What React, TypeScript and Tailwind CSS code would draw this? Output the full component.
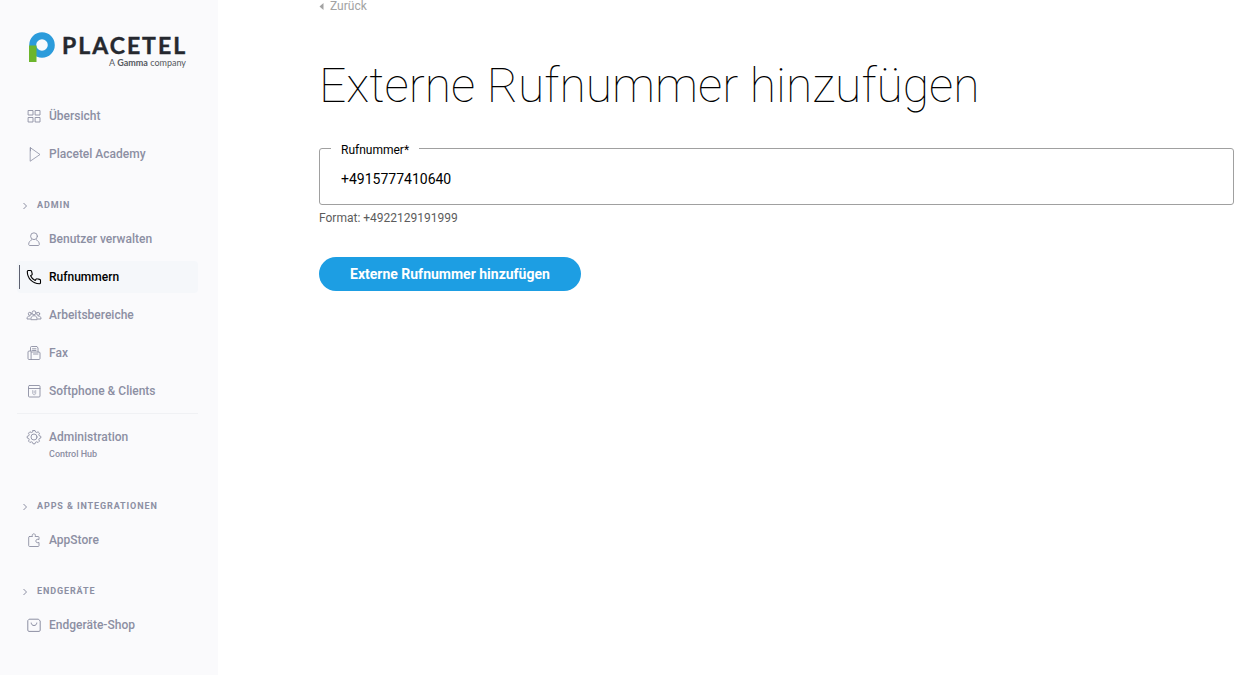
import { useState } from 'react';
import type { ReactNode } from 'react';

interface NavItemProps {
  icon: ReactNode;
  label: string;
  active?: boolean;
}

function Icon({ children }: { children: ReactNode }) {
  return (
    <svg
      viewBox="0 0 16 16"
      className="h-4 w-4 shrink-0"
      fill="none"
      stroke="currentColor"
      strokeLinecap="round"
      strokeLinejoin="round"
      aria-hidden="true"
    >
      {children}
    </svg>
  );
}

const icons = {
  grid: (
    <Icon>
      <path d="M2.5 2.5h4.5v4.5h-4.5zM9.5 2.5h4.5v4.5h-4.5zM2.5 9.5h4.5v4.5h-4.5zM9.5 9.5h4.5v4.5h-4.5z" strokeWidth="0.9" />
    </Icon>
  ),
  play: (
    <Icon>
      <path d="M4.5 1.8L14 8.5 4.5 15zM4.5 1.8v3" strokeWidth="0.8" />
    </Icon>
  ),
  user: (
    <Icon>
      <circle cx="8" cy="5.2" r="3.4" strokeWidth="0.9" />
      <path d="M5.6 8.8C4 9.7 2.7 11.2 2.7 13.2c0 1 .4 1.3 1.2 1.3h8.200c.8 0 1.2-.3 1.2-1.3 0-2-1.3-3.5-2.9-4.4" strokeWidth="0.9" />
    </Icon>
  ),
  phone: (
    <Icon>
      <path
        d="M2.2 1.5h2.4c.5 0 .9.3 1 .8l.6 2.6c.1.4 0 .8-.4 1l-1.2.9c.9 2.2 2.4 3.7 4.6 4.6l.9-1.2c.3-.3.7-.5 1-.4l2.6.6c.5.1.8.5.8 1v2.3c0 .6-.5 1-1.1 1C6.6 14.7 1.3 9.4 1.3 2.5c0-.6.4-1 .9-1z"
        strokeWidth="1.1"
      />
    </Icon>
  ),
  group: (
    <Icon>
      <g strokeWidth="0.9">
        <circle cx="8" cy="5.8" r="2" />
        <circle cx="3.8" cy="6.8" r="1.5" />
        <circle cx="12.2" cy="6.8" r="1.5" />
        <path d="M4.8 12.3c0-2.3 1.2-3.6 3.2-3.6s3.2 1.3 3.2 3.6zM4 12H1c0-2.1.9-3.1 2.8-3.1M12 12h3c0-2.1-.9-3.1-2.8-3.1" />
      </g>
    </Icon>
  ),
  fax: (
    <Icon>
      <g strokeWidth="0.9">
        <path d="M5.5 14.5h7.500c.6 0 1-.4 1-1V8c0-.6-.4-1-1-1H5.5zM5.5 14.5H3c-.6 0-1-.4-1-1V7c0-.6.5-1 1-1h2.5M4.5 6V2.5c0-.5.3-1 1-1H11l1 1.5v4" />
        <path d="M6.5 3.8h3.5M6.5 5.5h3.5M7.5 9h4.5" />
      </g>
    </Icon>
  ),
  app: (
    <Icon>
      <rect x="2.5" y="2.5" width="11.5" height="11.5" rx="1" strokeWidth="0.9" />
      <path d="M2.5 5.5h11.5" strokeWidth="0.9" />
      <path d="M6.7 7.5v2.5c0 1.2.6 1.7 1.5 1.7s1.5-.5 1.5-1.7V7.5M8.2 8v2" strokeWidth="0.6" />
    </Icon>
  ),
  gear: (
    <Icon>
      <g strokeWidth="0.9">
        <circle cx="8" cy="8" r="3" />
        <path d="M7 1.5h2l.5 1.5 1.2.5 1.4-.7 1.4 1.4-.7 1.4.5 1.2 1.5.5v1.7l-1.5.5-.5 1.2.7 1.4-1.4 1.4-1.4-.7-1.2.5L9 14.8H7l-.5-1.5-1.2-.5-1.4.7-1.4-1.4.7-1.4-.5-1.2L1.2 9V7.3l1.5-.5.5-1.2-.7-1.4 1.4-1.4 1.4.7L6.5 3z" />
      </g>
    </Icon>
  ),
  puzzle: (
    <Icon>
      <path d="M3.5 4.5h3c-.7-1.5 0-2.7 1.3-2.7s2 1.2 1.3 2.7h3.2c.4 0 .7.3.7.7v2.3c-1.7-.7-3.2.2-3.2 1.5s1.5 2.2 3.2 1.5v3.2c0 .4-.3.8-.7.8H3.5c-.5 0-.8-.4-.8-.8V5.2c0-.4.3-.7.8-.7z" strokeWidth="0.9" />
    </Icon>
  ),
  bag: (
    <Icon>
      <path d="M3.5 2.2h9l1.7 1.8v9.200c0 .7-.5 1.2-1.2 1.2H3c-.7 0-1.2-.5-1.2-1.2V4z" />
      <path d="M5.2 6c0 1.5 1.2 2.5 2.8 2.5s2.8-1 2.8-2.5" />
    </Icon>
  ),
};

function NavItem({ icon, label, active }: NavItemProps) {
  return (
    <li>
      <a
        href="#"
        aria-current={active ? 'page' : undefined}
        className={
          active
            ? 'flex h-8 items-center rounded bg-[#f5f7fa] pl-0.5 text-black'
            : 'flex h-8 items-center rounded pl-0.5 text-[#8c8fa3] hover:text-black'
        }
      >
        <span className={active ? 'h-6 w-px bg-[#5d6070]' : 'h-6 w-px'} />
        <span className="ml-1.5 flex">{icon}</span>
        <span className="ml-[7px] text-xs font-medium">{label}</span>
      </a>
    </li>
  );
}

function NavHeading({ children }: { children: ReactNode }) {
  return (
    <button type="button" className="flex h-4 items-center gap-2 pl-1 text-[9px] font-bold tracking-widest text-[#8c8fa3]">
      <svg viewBox="0 0 8 8" className="h-2 w-2" fill="none" stroke="currentColor" aria-hidden="true">
        <path d="M2.5 1l3 3-3 3" />
      </svg>
      {children}
    </button>
  );
}

function Logo() {
  return (
    <a href="#" aria-label="Placetel" className="ml-[11px] flex h-9 w-40">
      <svg viewBox="0 0 160 36" className="h-9 w-40">
        <circle cx="14" cy="13" r="9.3" fill="none" stroke="#2b9bdb" strokeWidth="7" />
        <path d="M1 13.5h7.5v16.5H1z" fill="#6cb52d" />
        <text x="34" y="22" fontFamily="Lato, sans-serif" fontWeight="700" fontSize="23" letterSpacing="2" fill="#25282f" stroke="#25282f" strokeWidth="0.4">
          PLACETEL
        </text>
        <text x="158" y="34" textAnchor="end" fontFamily="Lato, sans-serif" fontSize="9" fill="#555960">
          A <tspan fontWeight="700">Gamma</tspan> company
        </text>
      </svg>
    </a>
  );
}

function Sidebar() {
  return (
    <aside className="w-[218px] shrink-0 bg-[#fafafc] pt-8 pr-5 pl-[17px]">
      <Logo />
      <nav>
        <ul className="mt-8 space-y-1.5">
          <NavItem icon={icons.grid} label="Übersicht" />
          <NavItem icon={icons.play} label="Placetel Academy" />
        </ul>

        <div className="mt-7">
          <NavHeading>ADMIN</NavHeading>
          <ul className="mt-[9px] space-y-1.5">
            <NavItem icon={icons.user} label="Benutzer verwalten" />
            <NavItem icon={icons.phone} label="Rufnummern" active />
            <NavItem icon={icons.group} label="Arbeitsbereiche" />
            <NavItem icon={icons.fax} label="Fax" />
            <NavItem icon={icons.app} label="Softphone & Clients" />
          </ul>
          <hr className="mt-1.5 border-[#f0f1f4]" />
          <a href="#" className="mt-[15px] flex gap-[7px] pl-[9px] font-medium text-[#8c8fa3] hover:text-black">
            {icons.gear}
            <span className="flex flex-col">
              <span className="text-xs">Administration</span>
              <span className="text-[9px] leading-[18px]">Control Hub</span>
            </span>
          </a>
        </div>

        <div className="mt-9">
          <NavHeading>APPS &amp; INTEGRATIONEN</NavHeading>
          <ul className="mt-[9px]">
            <NavItem icon={icons.puzzle} label="AppStore" />
          </ul>
        </div>

        <div className="mt-7">
          <NavHeading>ENDGERÄTE</NavHeading>
          <ul className="mt-[9px]">
            <NavItem icon={icons.bag} label="Endgeräte-Shop" />
          </ul>
        </div>
      </nav>
    </aside>
  );
}

export default function App() {
  const [number, setNumber] = useState('+4915777410640');

  return (
    <div className="flex min-h-screen bg-white font-['Roboto',sans-serif]">
      <Sidebar />
      <main className="min-w-0 flex-1 pr-3.5 pl-[101px]">
        <a href="#" className="flex items-center gap-1.5 text-xs leading-3 text-[#a3a3a3]">
          <svg viewBox="0 0 5 8" className="h-2 w-[5px]" fill="currentColor" aria-hidden="true">
            <path d="M4.5 1v7L0.5 4.5z" />
          </svg>
          Zurück
        </a>

        <h1 className="mt-[42px] text-[48px] leading-[64px] font-thin text-black">
          Externe Rufnummer hinzufügen
        </h1>

        <form className="mt-5" onSubmit={(e) => e.preventDefault()}>
          <fieldset className="h-[67px] rounded-[3px] border border-[#a0a0a0] px-[11px]">
            <legend className="px-2.5 pt-1 text-xs text-black">
              <label htmlFor="number">Rufnummer*</label>
            </legend>
            <input
              id="number"
              type="tel"
              value={number}
              onChange={(e) => setNumber(e.target.value)}
              className="h-[42px] w-full bg-transparent px-2.5 text-sm text-black focus:outline-none"
            />
          </fieldset>
          <p className="mt-[5px] text-xs text-[#5c5c5c]">Format: +4922129191999</p>
          <button
            type="submit"
            className="mt-[31px] h-[34px] rounded-full bg-[#1d9ee3] px-[31px] text-sm font-bold text-white hover:bg-[#1889c6]"
          >
            Externe Rufnummer hinzufügen
          </button>
        </form>
      </main>
    </div>
  );
}
